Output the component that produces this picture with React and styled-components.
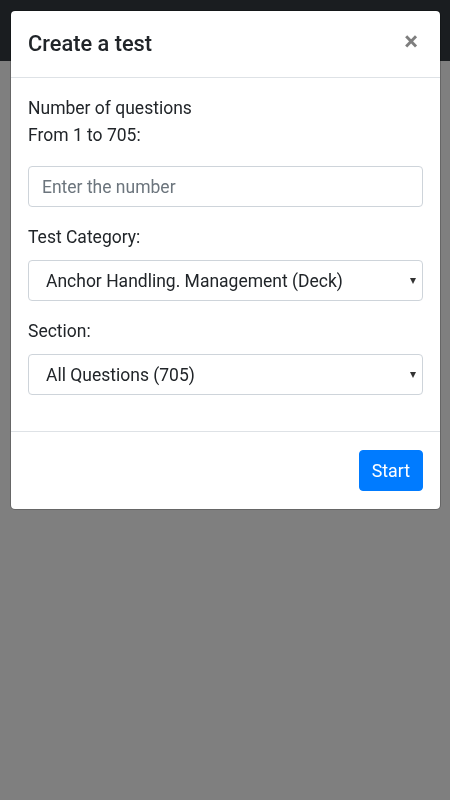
import React from "react";
import styled, { createGlobalStyle } from "styled-components";

const Global = createGlobalStyle`
  html, body { margin: 0; padding: 0; }
  body {
    background: #ffffff;
    font-family: Roboto, "Noto Sans", "Liberation Sans", sans-serif;
    color: #212529;
    font-size: 17.5px;
  }
  * { box-sizing: border-box; }
`;

const Page = styled.div`
  min-height: 800px;
  background: #ffffff;
`;

const NavBar = styled.div`
  height: 61px;
  background: #343a40;
`;

const Backdrop = styled.div`
  position: fixed;
  inset: 0;
  background: rgba(0, 0, 0, 0.5);
  padding: 10px 9px 0 10px;
`;

const Dialog = styled.div`
  background: #fff;
  border: 1px solid rgba(0, 0, 0, 0.2);
  border-radius: 5px;
  background-clip: padding-box;
  display: flex;
  flex-direction: column;
`;

const Header = styled.div`
  display: flex;
  align-items: center;
  justify-content: space-between;
  height: 67px;
  padding: 0 17px 0 17px;
  border-bottom: 1px solid #dee2e6;
`;

const Title = styled.h5`
  margin: 0;
  font-size: 21.8px;
  font-weight: 500;
  line-height: 1.5;
  padding-top: 1px;
`;

const Close = styled.button`
  border: 0;
  background: transparent;
  padding: 0;
  margin: -6px 5px 0 0;
  font-family: Roboto, "Liberation Sans", sans-serif;
  font-size: 26px;
  font-weight: 700;
  line-height: 1;
  color: #000;
  opacity: 0.5;
`;

const Body = styled.div`
  padding: 17px 17px 19px;
`;

const Group = styled.div`
  margin-bottom: 17px;
`;

const Label = styled.div`
  font-size: 17.5px;
  line-height: 27px;
  margin-bottom: ${(p) => (p.$big ? "17px" : "9px")};
`;

const Input = styled.input`
  display: block;
  width: 100%;
  height: 41px;
  padding: 0 13px;
  font-family: inherit;
  font-size: 17.5px;
  color: #495057;
  border: 1px solid #ced4da;
  border-radius: 4px;
  background: #fff;
  outline: none;
  &::placeholder { color: #6c757d; opacity: 1; }
`;

const SelectBox = styled.div`
  position: relative;
  height: 41px;
  border: 1px solid #ced4da;
  border-radius: 4px;
  display: flex;
  align-items: center;
  padding: 0 17px;
  font-size: 17.5px;
  color: #212529;
`;

const Arrow = styled.span`
  position: absolute;
  right: 6px;
  top: 50%;
  transform: translateY(-50%);
  width: 0;
  height: 0;
  border-left: 3.5px solid transparent;
  border-right: 3.5px solid transparent;
  border-top: 6px solid #333;
`;

const Footer = styled.div`
  display: flex;
  justify-content: flex-end;
  padding: 18px 17px 18px;
  border-top: 1px solid #dee2e6;
`;

const Button = styled.button`
  height: 41px;
  padding: 0 12px;
  border: 1px solid #007bff;
  border-radius: 4px;
  background: #007bff;
  color: #fff;
  font-family: inherit;
  font-size: 17.8px;
`;

export default function App() {
  return (
    <>
      <Global />
      <Page>
        <NavBar />
      </Page>
      <Backdrop>
        <Dialog>
          <Header>
            <Title>Create a test</Title>
            <Close aria-label="Close">×</Close>
          </Header>
          <Body>
            <Group>
              <Label $big>
                Number of questions
                <br />
                From 1 to 705:
              </Label>
              <Input type="number" placeholder="Enter the number" />
            </Group>
            <Group>
              <Label>Test Category:</Label>
              <SelectBox>
                Anchor Handling. Management (Deck)
                <Arrow />
              </SelectBox>
            </Group>
            <Group>
              <Label>Section:</Label>
              <SelectBox>
                All Questions (705)
                <Arrow />
              </SelectBox>
            </Group>
          </Body>
          <Footer>
            <Button>Start</Button>
          </Footer>
        </Dialog>
      </Backdrop>
    </>
  );
}
